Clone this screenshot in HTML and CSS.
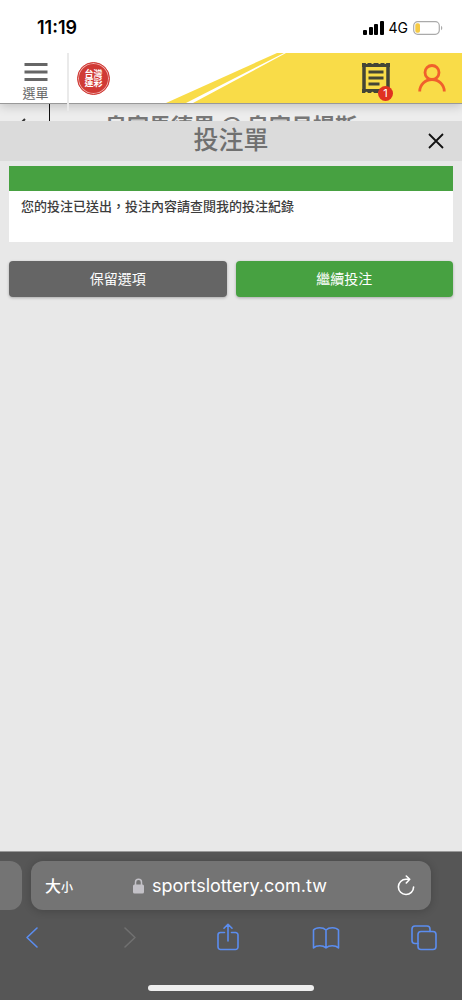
FILE: index.html
```html
<!DOCTYPE html>
<html lang="zh-Hant">
<head>
<meta charset="utf-8">
<meta name="viewport" content="width=device-width, initial-scale=1">
<title>投注單</title>
<link rel="stylesheet" href="styles.css">
</head>
<body>
<div class="status">
  <span class="time">11:19</span>
  <div class="status-right">
    <svg width="21" height="14" viewBox="0 0 21 14" aria-hidden="true"><rect y="9" width="4" height="5" rx="1"/><rect x="6" y="6" width="4" height="8" rx="1"/><rect x="11" y="3" width="4" height="11" rx="1"/><rect x="17" y="0" width="4" height="14" rx="1"/></svg>
    <span class="network">4G</span>
    <svg width="30" height="14" viewBox="0 0 30 14" aria-hidden="true"><rect x=".7" y=".7" width="25.6" height="12.6" rx="4" fill="#fff" stroke="#aaa" stroke-width="1.2"/><rect x="2.3" y="2.3" width="4.7" height="9.4" rx="1.8" fill="#f5ca45"/><path d="M28 4.7v4.6q1.3-.7 1.3-2.3T28 4.7z" fill="#aaa"/></svg>
  </div>
</div>
<header class="header">
  <svg class="header-art" width="296" height="50" viewBox="0 0 296 50" aria-hidden="true"><path d="M0 50L111 0H296V50z" fill="#f9dc48"/><path d="M20 50L118 0H120L27 50z" fill="#fff"/></svg>
  <button class="menu" type="button">
    <svg width="24" height="18" viewBox="0 0 24 18" aria-hidden="true"><path d="M0.500 1.5h23M0.500 9h23M0.500 16.5h23" stroke="#666" stroke-width="2.8"/></svg>
    <span>選單</span>
  </button>
  <a class="logo" href="#" aria-label="台灣運彩"><span>台灣<br>運彩</span></a>
  <div class="header-actions">
    <button class="slip" type="button" aria-label="投注單 1">
      <svg width="28" height="32" viewBox="0 0 28 32" aria-hidden="true"><path d="M2 1V30M26 1V30" stroke="#444536" stroke-width="3.5"/><path d="M0 1h3q1.500 2 3 0h3q1.500 2 3 0h4q1.500 2 3 0h3q1.500 2 3 0h3v4H0zM0 31h3q1.500-2.500 3 0h3q1.500-2.500 3 0h4q1.500-2.500 3 0h3q1.500-2.500 3 0h3v-4H0z" fill="#444536"/><path d="M6.500 10h15M6.500 16h15M6.500 22h11" stroke="#444536" stroke-width="3"/></svg>
      <span class="badge">1</span>
    </button>
    <button class="account" type="button" aria-label="會員">
      <svg width="28" height="28" viewBox="0 0 28 28" fill="none" stroke="#f0602c" stroke-width="2.8" aria-hidden="true"><circle cx="14" cy="8.500" r="7"/><path d="M1.700 27.500a12.300 12 0 0 1 24.600 0"/></svg>
    </button>
  </div>
</header>
<div class="match">
  <div class="match-back"><svg width="12" height="18" viewBox="0 0 12 18" fill="none" stroke="#333" stroke-width="2" aria-hidden="true"><path d="M10 1L2 9l8 8"/></svg></div>
  <div class="match-name">皇家馬德里 @ 皇家貝提斯</div>
</div>
<div class="title-bar">
  <h1>投注單</h1>
  <button class="close" type="button" aria-label="關閉"><svg width="16" height="16" viewBox="0 0 16 16" stroke="#111" stroke-width="1.800" aria-hidden="true"><path d="M1 1l14 14M15 1L1 15"/></svg></button>
</div>
<main class="content">
  <section class="notice"><p>您的投注已送出，投注內容請查閱我的投注紀錄</p></section>
  <div class="actions">
    <button class="btn" type="button">保留選項</button>
    <button class="btn btn-primary" type="button">繼續投注</button>
  </div>
</main>
<footer class="browser">
  <div class="address-row">
    <div class="previous-tab"></div>
    <div class="address">
      <button class="text-size" type="button">大<small>小</small></button>
      <div class="site">
        <svg width="11" height="16" viewBox="0 0 11 16" aria-hidden="true"><path d="M2.500 7V4.200a3 3 0 0 1 6 0V7" fill="none" stroke="#c3c1c7" stroke-width="1.500"/><rect y="6.500" width="11" height="9" rx="1.500" fill="#c3c1c7"/></svg>
        <span>sportslottery.com.tw</span>
      </div>
      <button class="reload" type="button" aria-label="重新載入"><svg width="18" height="22" viewBox="0 0 18 22" fill="none" stroke="#fff" stroke-width="1.600" stroke-linecap="round" stroke-linejoin="round" aria-hidden="true"><path d="M12.500 4.300H9A7.600 7.600 0 1 0 16.600 12M9.300 1l3.400 3.300-3.400 3.700"/></svg></button>
    </div>
  </div>
  <nav class="tools" aria-label="瀏覽器">
    <button type="button" aria-label="上一頁"><svg width="14" height="28" viewBox="0 0 14 28"><path d="M12 5L2 14.500l10 9.500"/></svg></button>
    <button class="inactive" type="button" aria-label="下一頁" disabled><svg width="14" height="28" viewBox="0 0 14 28"><path d="M2 5l10 9.500L2 24"/></svg></button>
    <button type="button" aria-label="分享"><svg width="22" height="28" viewBox="0 0 22 28"><path d="M7.500 9.500H3.500a2.500 2.500 0 0 0-2.500 2.500v12a2.500 2.500 0 0 0 2.500 2.500h15a2.500 2.500 0 0 0 2.500-2.500V12a2.500 2.500 0 0 0-2.500-2.500h-4M11 18V1.500M7 5.300l4-4 4 4"/></svg></button>
    <button type="button" aria-label="書籤"><svg width="28" height="28" viewBox="0 0 28 28"><path d="M14 7C11 4 4 4 1.500 7v18c3-3 9.500-3 12.500 0 3-3 9.500-3 12.500 0V7C24 4 17 4 14 7v18"/></svg></button>
    <button type="button" aria-label="分頁"><svg width="26" height="28" viewBox="0 0 26 28"><rect x="7" y="8.500" width="18" height="18" rx="3"/><path d="M7 20.500H4a3 3 0 0 1-3-3V6a3 3 0 0 1 3-3h12a3 3 0 0 1 3 3v2.500"/></svg></button>
  </nav>
  <div class="home-indicator"></div>
</footer>
</body>
</html>
```
FILE: styles.css
```css
* { box-sizing: border-box; }

body {
  margin: 0;
  min-height: 100vh;
  display: flex;
  flex-direction: column;
  background: #e8e8e8;
  color: #3c3c3c;
  font-family: "Noto Sans CJK TC", sans-serif;
}

button {
  margin: 0;
  padding: 0;
  border: 0;
  background: none;
  color: inherit;
  font: inherit;
}

svg { display: block; flex: none; }

.status {
  position: relative;
  z-index: 2;
  display: flex;
  align-items: center;
  justify-content: space-between;
  padding: 15px 19px 12px 37px;
  background: #fff;
  color: #000;
  font-family: Inter, sans-serif;
}

.time { font-size: 18px; line-height: 26px; font-weight: 600; }
.status-right { display: flex; align-items: center; gap: 5px; }
.network { font-size: 14px; line-height: 20px; font-weight: 400; }

.header {
  position: relative;
  z-index: 1;
  display: flex;
  align-items: stretch;
  height: 50px;
  background: #fff;
  box-shadow: 0 1px 0 #999, 0 3px 10px #0003;
}

.header-art { position: absolute; top: 0; right: 0; }

.menu {
  width: 69px;
  height: 58px;
  padding: 10px 0 0 4px;
  border-right: 2px solid #eaeaea;
  display: flex;
  flex-direction: column;
  align-items: center;
  gap: 3px;
  color: #666;
  font-size: 13px;
  line-height: 18px;
}

.logo {
  align-self: center;
  display: grid;
  place-items: center;
  width: 33px;
  height: 33px;
  margin-left: 8px;
  border: 1px solid #d03a35;
  border-radius: 50%;
  background: #d03a35;
  box-shadow: inset 0 0 0 1px #f0b0ac;
  color: #fff;
  font-size: 9px;
  line-height: 9px;
  font-weight: 700;
  text-decoration: none;
}

.header-actions {
  position: relative;
  display: flex;
  align-items: center;
  gap: 28px;
  margin-left: auto;
  padding-right: 16px;
}

.slip { position: relative; }

.badge {
  position: absolute;
  right: -3px;
  bottom: -7px;
  width: 15px;
  border-radius: 50%;
  background: #e03020;
  color: #fff;
  font: 11px/15px Inter, sans-serif;
}

.match {
  display: flex;
  height: 18px;
  overflow: hidden;
  background: #ededed;
}

.match-back {
  width: 50px;
  padding: 15px 0 0 15px;
  border-right: 1px solid #111;
}

.match-name {
  flex: 1;
  padding: 7px 50px 0 0;
  color: #777;
  font-size: 22px;
  line-height: 28px;
  font-weight: 700;
  text-align: center;
  white-space: nowrap;
}

.title-bar {
  display: grid;
  grid-template-columns: 1fr auto 1fr;
  align-items: center;
  height: 40px;
  padding: 0 18px;
  background: #dbdbdb;
}

.title-bar h1 {
  grid-column: 2;
  margin: 0;
  padding-bottom: 6px;
  color: #707070;
  font-size: 25px;
  line-height: 34px;
  font-weight: 500;
}

.close { justify-self: end; }

.content { flex: 1; padding: 5px 9px; }

.notice {
  min-height: 76px;
  border-top: 25px solid #47a141;
  background: #fff;
}

.notice p {
  margin: 0;
  padding: 6px 12px;
  font-size: 13px;
  line-height: 18px;
  font-weight: 500;
}

.actions {
  display: grid;
  grid-template-columns: 1fr 1fr;
  gap: 9px;
  margin-top: 19px;
}

.btn {
  height: 36px;
  padding-bottom: 2px;
  border-radius: 4px;
  background: #656565;
  box-shadow: 0 1px 3px #0004;
  color: #fff;
  font-size: 14px;
  line-height: 20px;
}

.btn-primary { background: #47a141; }

.browser {
  padding: 9px 0;
  border-top: 1px solid #999;
  background: #565656;
  overflow: hidden;
}

.address-row {
  display: flex;
  gap: 9px;
  padding-right: 31px;
}

.previous-tab {
  width: 22px;
  border-radius: 0 12px 12px 0;
  background: #747474;
}

.address {
  flex: 1;
  display: grid;
  grid-template-columns: 1fr auto 1fr;
  align-items: center;
  height: 49px;
  padding: 0 16px 0 14px;
  border-radius: 12px;
  background: #747474;
  box-shadow: 0 1px 9px #0003;
  color: #fff;
}

.text-size { justify-self: start; font-size: 16px; line-height: 24px; font-weight: 500; }
.text-size small { font-size: 12px; }
.reload { justify-self: end; }

.site {
  display: flex;
  align-items: center;
  gap: 8px;
  font: 18px/24px Inter, sans-serif;
}

.tools {
  display: flex;
  align-items: center;
  justify-content: space-between;
  padding: 13px 24px 34px 18px;
}

.tools button {
  display: grid;
  place-items: center;
  width: 28px;
}

.tools svg {
  fill: none;
  stroke: #5b8def;
  stroke-width: 1.6;
  stroke-linecap: round;
  stroke-linejoin: round;
}

.tools .inactive svg { stroke: #707070; }

.home-indicator {
  width: 166px;
  height: 6px;
  margin: 0 auto;
  border-radius: 3px;
  background: #eee;
}
```
